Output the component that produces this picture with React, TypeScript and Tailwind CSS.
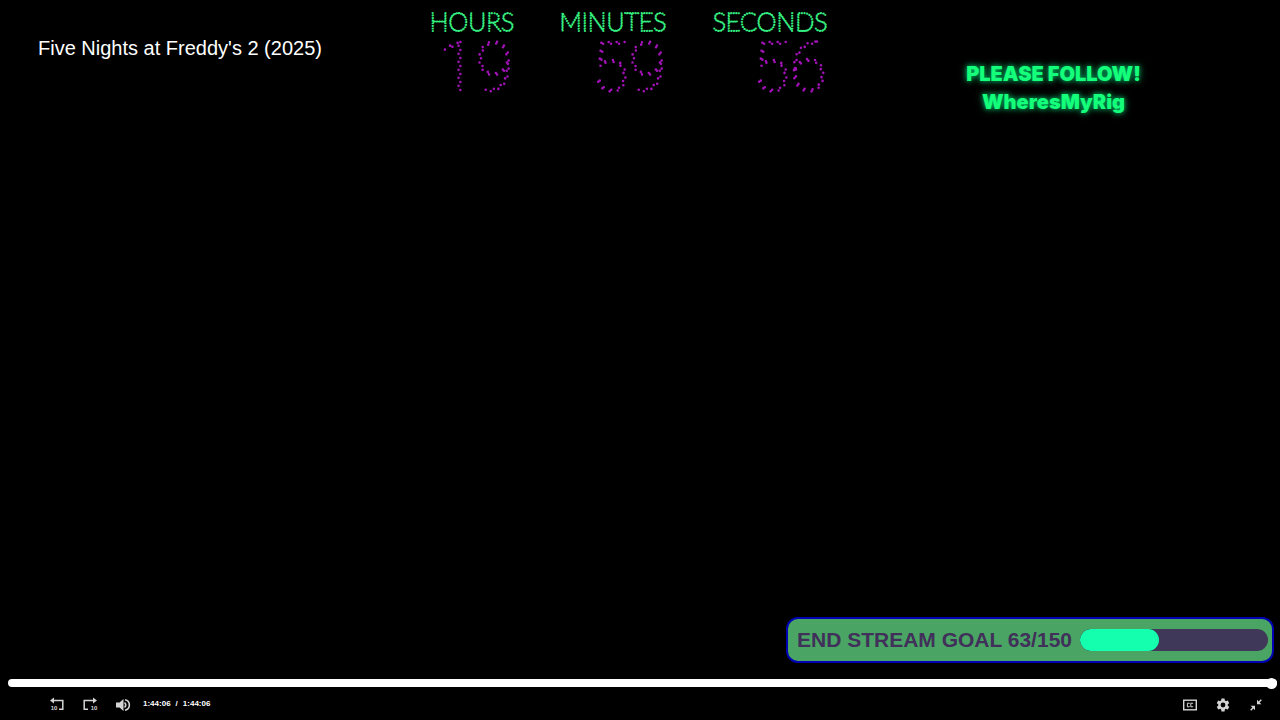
type Counter = {
  label: string;
  value: string;
  width: string;
};

const counters: Counter[] = [
  { label: 'HOURS', value: '19', width: 'w-[82px]' },
  { label: 'MINUTES', value: '59', width: 'w-[106px]' },
  { label: 'SECONDS', value: '56', width: 'w-[114px]' },
];

function DottedCounter({ label, value, width }: Counter) {
  return (
    <div className={`flex flex-col items-end ${width}`}>
      <svg className="h-9 w-full overflow-visible">
        <text
          x="50%"
          y="31"
          textAnchor="middle"
          className="fill-none stroke-[#35ee80] font-['Lato',sans-serif] text-[25px] font-thin"
          strokeWidth="1.9"
          strokeLinecap="round"
          strokeDasharray="0 2.6"
        >
          {label}
        </text>
      </svg>
      <svg className="h-16 w-20 overflow-visible" viewBox="0 0 80 64">
        <text
          x="80"
          y="55"
          textAnchor="end"
          className="fill-none stroke-[#a312b8] font-['Roboto',sans-serif] text-[68px] font-thin"
          strokeWidth="2.6"
          strokeLinecap="round"
          strokeDasharray="0 8"
        >
          {value}
        </text>
      </svg>
    </div>
  );
}

function SkipIcon({ forward = false }: { forward?: boolean }) {
  return (
    <svg className="h-4 w-4" viewBox="0 0 16 16">
      <g transform={forward ? 'translate(16 0) scale(-1 1)' : undefined}>
        <path d="M4 3.5H13.8V12.3H10" fill="none" stroke="#d4d4d4" strokeWidth="1.5" />
        <path d="M1 3.5 5 .5V6.5Z" fill="#d4d4d4" />
      </g>
      <text
        x={forward ? 12 : 5}
        y="13"
        textAnchor="middle"
        className="fill-neutral-300 font-['Liberation_Sans',sans-serif] text-[6px] font-bold"
      >
        10
      </text>
    </svg>
  );
}

function VolumeIcon() {
  return (
    <svg className="h-4 w-4" viewBox="0 0 16 16">
      <path d="M1 5.5H4.5L8.5 2V14L4.5 10.5H1Z" fill="#d4d4d4" />
      <path
        d="M9.5 5.5Q12 8 9.5 10.5M10 2.8C15.8 4 15.8 12 10 13.2"
        fill="none"
        stroke="#d4d4d4"
        strokeWidth="1.6"
      />
    </svg>
  );
}

function CaptionsIcon() {
  return (
    <svg className="h-4 w-4" viewBox="0 0 16 16">
      <rect x="1.7" y="3.2" width="12.6" height="9.6" fill="none" stroke="#d4d4d4" strokeWidth="1.4" />
      <path
        d="M7.3 6.8V6.2H5.4V9.8H7.3V9.2M10.7 6.8V6.2H8.8V9.8H10.7V9.2"
        fill="none"
        stroke="#d4d4d4"
        strokeWidth="1"
      />
    </svg>
  );
}

function SettingsIcon() {
  return (
    <svg className="h-4 w-4" viewBox="0 0 24 24" fill="#d4d4d4">
      <path d="M19.14 12.94c.04-.3.06-.61.06-.94s-.02-.64-.07-.94l2.03-1.58a.49.49 0 0 0 .12-.61l-1.92-3.32a.49.49 0 0 0-.59-.22l-2.39.96a7 7 0 0 0-1.62-.94l-.36-2.54a.48.48 0 0 0-.48-.41h-3.84a.48.48 0 0 0-.47.41l-.36 2.54c-.59.24-1.13.57-1.62.94l-2.39-.96a.48.48 0 0 0-.59.22L2.74 8.87a.48.48 0 0 0 .12.61l2.03 1.58a6 6 0 0 0 0 1.88l-2.03 1.58a.49.49 0 0 0-.12.61l1.92 3.32c.12.22.37.29.59.22l2.39-.96c.5.38 1.03.7 1.62.94l.36 2.54c.05.24.24.41.48.41h3.84c.24 0 .44-.17.47-.41l.36-2.54a7 7 0 0 0 1.62-.94l2.39.96c.22.08.47 0 .59-.22l1.92-3.32a.48.48 0 0 0-.12-.61zM12 15.6a3.6 3.6 0 1 1 0-7.2 3.6 3.6 0 0 1 0 7.2z" />
    </svg>
  );
}

function ExitFullscreenIcon() {
  return (
    <svg className="h-4 w-4" viewBox="0 0 16 16">
      <path d="M9 7.2V2.8L10.6 4.4 12.8 2.2 13.8 3.2 11.6 5.4 13.4 7.2Z" fill="#d4d4d4" />
      <path d="M7 8.8V13.2L5.4 11.6 3.2 13.8 2.2 12.8 4.4 10.6 2.6 8.8Z" fill="#d4d4d4" />
    </svg>
  );
}

export default function App() {
  return (
    <div className="flex min-h-screen flex-col overflow-hidden bg-black font-['Liberation_Sans',Arial,sans-serif]">
      <header className="flex items-start">
        <h1 className="w-[431px] pt-8 pl-[38px] text-xl leading-8 text-white">
          Five Nights at Freddy's 2 (2025)
        </h1>
        <div className="flex gap-[47px]">
          {counters.map((counter) => (
            <DottedCounter key={counter.label} {...counter} />
          ))}
        </div>
        <div className="flex-1 pt-[60px] text-center font-['Inter',sans-serif] text-xl leading-7 font-black text-[#14ff7a] [text-shadow:0_0_5px_#00b060,0_0_8px_#007a48]">
          <p>PLEASE FOLLOW!</p>
          <p>WheresMyRig</p>
        </div>
      </header>

      <main className="flex flex-1 items-end justify-end pr-1.5 pb-[14px]">
        <div className="flex h-[46px] items-center gap-2 rounded-xl border-2 border-[#0000b4] bg-[#4aa564] pr-1 pl-[9px]">
          <label htmlFor="goal" className="text-[21px] leading-7 font-bold text-[#40305a]">
            END STREAM GOAL 63/150
          </label>
          <progress
            id="goal"
            value={63}
            max={150}
            className="h-[22px] w-[188px] appearance-none overflow-hidden rounded-full bg-[#403858] [&::-webkit-progress-bar]:bg-[#403858] [&::-webkit-progress-value]:rounded-full [&::-webkit-progress-value]:bg-[#14ffae]"
          />
        </div>
      </main>

      <footer>
        <div className="flex h-3 items-center pr-[3px] pl-2">
          <input
            type="range"
            aria-label="Seek"
            min={0}
            max={6246}
            defaultValue={6246}
            className="h-2 w-full appearance-none rounded-full bg-white [&::-webkit-slider-thumb]:h-[11px] [&::-webkit-slider-thumb]:w-[11px] [&::-webkit-slider-thumb]:appearance-none [&::-webkit-slider-thumb]:rounded-full [&::-webkit-slider-thumb]:bg-white"
          />
        </div>
        <div className="flex h-[31px] items-center justify-between pr-4 pl-[49px]">
          <div className="flex items-center gap-[17px]">
            <button type="button" aria-label="Back 10 seconds">
              <SkipIcon />
            </button>
            <button type="button" aria-label="Forward 10 seconds">
              <SkipIcon forward />
            </button>
            <button type="button" aria-label="Volume">
              <VolumeIcon />
            </button>
            <div className="-ml-[5px] flex gap-[5px] pb-0.5 text-[8px] leading-4 font-bold text-white">
              <span>1:44:06</span>
              <span>/</span>
              <span>1:44:06</span>
            </div>
          </div>
          <div className="flex items-center gap-[17px]">
            <button type="button" aria-label="Captions">
              <CaptionsIcon />
            </button>
            <button type="button" aria-label="Settings">
              <SettingsIcon />
            </button>
            <button type="button" aria-label="Exit full screen">
              <ExitFullscreenIcon />
            </button>
          </div>
        </div>
      </footer>
    </div>
  );
}
